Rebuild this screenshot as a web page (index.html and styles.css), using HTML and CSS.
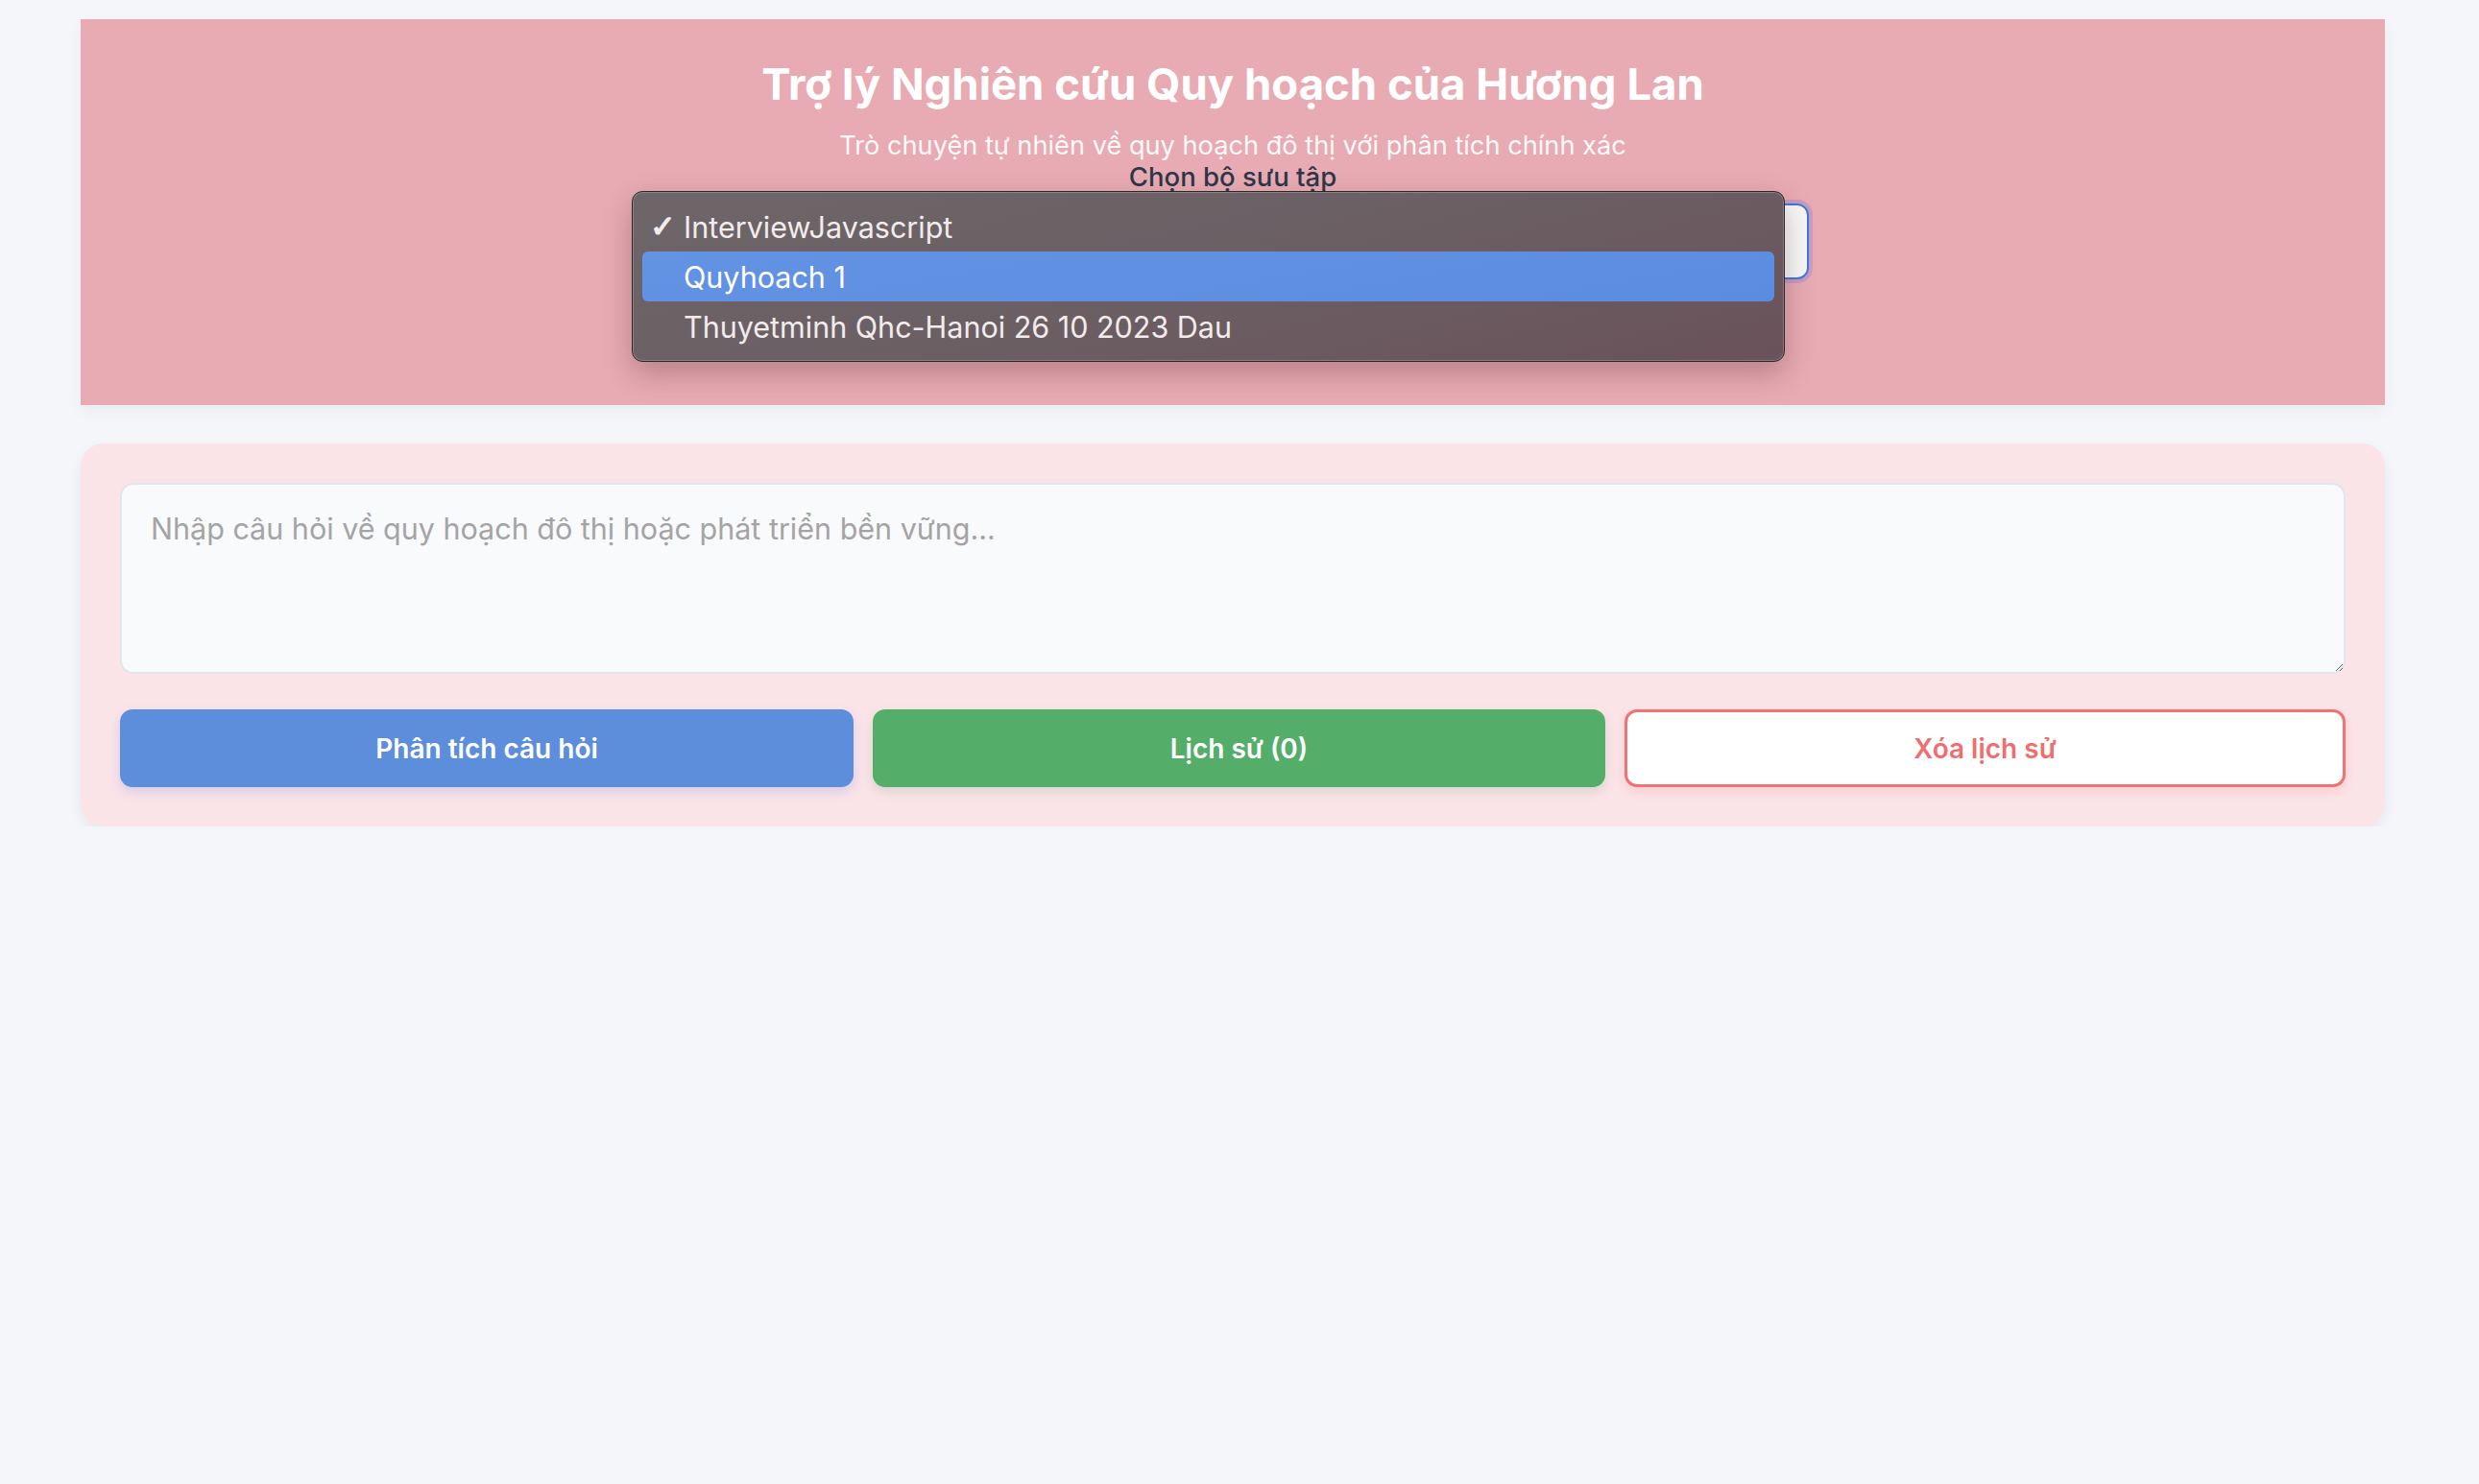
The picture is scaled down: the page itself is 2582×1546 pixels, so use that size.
FILE: index.html
```html
<!DOCTYPE html>
<html lang="vi">
<head>
<meta charset="utf-8">
<title>Trợ lý Nghiên cứu Quy hoạch của Hương Lan</title>
<link rel="stylesheet" href="styles.css">
</head>
<body>
<div class="app">
  <header class="hero">
    <h1 class="hero-title">Trợ lý Nghiên cứu Quy hoạch của Hương Lan</h1>
    <p class="hero-subtitle">Trò chuyện tự nhiên về quy hoạch đô thị với phân tích chính xác</p>
    <label class="collection-label" for="collection">Chọn bộ sưu tập</label>
    <select class="collection-select" id="collection">
      <option>InterviewJavascript</option>
      <option>Quyhoach 1</option>
      <option>Thuyetminh Qhc-Hanoi 26 10 2023 Dau</option>
    </select>
    <div class="select-menu">
      <div class="menu-item"><span class="menu-check">✓</span>InterviewJavascript</div>
      <div class="menu-item is-active"><span class="menu-check"></span>Quyhoach 1</div>
      <div class="menu-item"><span class="menu-check"></span>Thuyetminh Qhc-Hanoi 26 10 2023 Dau</div>
    </div>
  </header>

  <main class="ask-card">
    <textarea class="ask-input" placeholder="Nhập câu hỏi về quy hoạch đô thị hoặc phát triển bền vững..."></textarea>
    <div class="actions">
      <button class="btn btn-primary">Phân tích câu hỏi</button>
      <button class="btn btn-success">Lịch sử (0)</button>
      <button class="btn btn-danger">Xóa lịch sử</button>
    </div>
  </main>
</div>
</body>
</html>
```

FILE: styles.css
```css
* { box-sizing: border-box; }

html, body {
  margin: 0;
  padding: 0;
  background: #f5f6fa;
  font-family: Inter, "Noto Sans", "Liberation Sans", sans-serif;
}

.app {
  width: 2400px;
  margin: 20px 0 0 84px;
}

.hero {
  position: relative;
  background: #e8abb3;
  padding: 41px 0 131px;
  text-align: center;
  box-shadow: 0 6px 14px rgba(60, 60, 90, 0.06);
}

.hero-title {
  margin: 0 0 21px;
  font-size: 45.5px;
  line-height: 54px;
  font-weight: 700;
  color: #ffffff;
}

.hero-subtitle {
  margin: 0;
  font-size: 27.2px;
  line-height: 32px;
  font-weight: 400;
  color: rgba(255, 255, 255, 0.94);
}

.collection-label {
  display: block;
  font-size: 27.5px;
  line-height: 32px;
  font-weight: 500;
  color: #2d3748;
}

.collection-select {
  display: block;
  width: 1200px;
  height: 79px;
  margin: 12px auto 0;
  border: 2px solid #3f78e0;
  border-radius: 12px;
  background: linear-gradient(90deg, #f1f1f1, #f8f8f8);
  box-shadow: 0 0 0 4px rgba(110, 120, 225, 0.28);
  font-family: inherit;
  font-size: 28px;
  color: #2d3748;
  padding: 0 24px;
  -webkit-appearance: none;
  appearance: none;
}

.select-menu {
  position: absolute;
  left: 574px;
  top: 179px;
  width: 1201px;
  height: 178px;
  padding: 10px 10px;
  border-radius: 11px;
  border: 1px solid #2b2628;
  background: linear-gradient(165deg, #6d6669 0%, #6b5f64 50%, #6a525a 100%);
  box-shadow: inset 0 0 0 1px rgba(255, 255, 255, 0.22), 0 12px 30px rgba(60, 20, 30, 0.28);
  text-align: left;
}

.menu-item {
  display: flex;
  align-items: center;
  height: 52px;
  padding: 0 0 0 8px;
  border-radius: 6px;
  font-size: 30.5px;
  color: #f2ecec;
  white-space: nowrap;
}

.menu-item.is-active {
  background: linear-gradient(170deg, #6393e3, #5a8ce0);
  color: #ffffff;
}

.menu-check {
  display: inline-block;
  width: 35px;
  font-size: 32px;
  font-weight: 700;
  font-family: "DejaVu Sans", sans-serif;
  -webkit-text-stroke: 1.2px #f2ecec;
}

.ask-card {
  margin-top: 40px;
  background: #fbe4e8;
  border-radius: 24px;
  padding: 41px;
  box-shadow: 0 6px 14px rgba(60, 60, 90, 0.07);
}

.ask-input {
  display: block;
  width: 100%;
  height: 199px;
  padding: 23px 30px 16px;
  border: 2px solid #e1e6ec;
  border-radius: 14px;
  background: #f9fafc;
  font-family: inherit;
  font-size: 30.5px;
  line-height: 45px;
  color: #2d3748;
  resize: vertical;
  outline: none;
}

.ask-input::placeholder {
  color: #a4a4a6;
}

.actions {
  display: grid;
  grid-template-columns: 764fr 763fr 751fr;
  column-gap: 20px;
  margin-top: 37px;
}

.btn {
  height: 81px;
  border: none;
  border-radius: 13px;
  font-family: inherit;
  font-size: 28px;
  font-weight: 600;
  cursor: pointer;
}

.btn-primary {
  background: #5d8edc;
  color: #ffffff;
  box-shadow: 0 5px 12px rgba(93, 120, 220, 0.22);
}

.btn-success {
  background: #55ad6a;
  color: #ffffff;
  box-shadow: 0 5px 12px rgba(85, 150, 100, 0.2);
}

.btn-danger {
  background: #ffffff;
  color: #ee6f6f;
  border: 3px solid #ef7373;
  box-shadow: 0 5px 12px rgba(239, 115, 115, 0.2);
}
```
